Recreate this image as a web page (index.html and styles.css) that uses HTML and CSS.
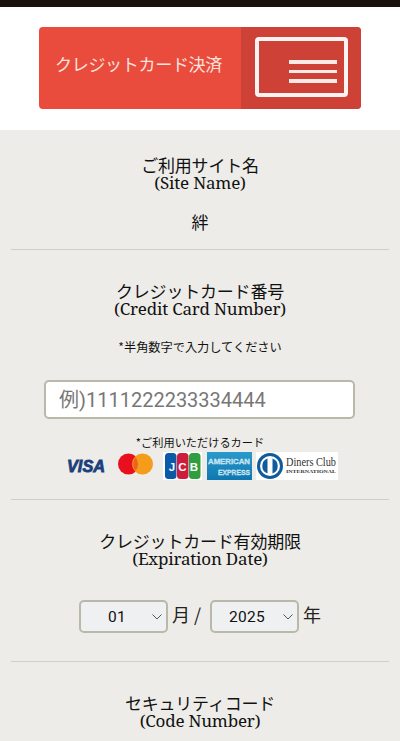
FILE: index.html
```html
<!DOCTYPE html>
<html lang="ja">
<head>
<meta charset="utf-8">
<title>クレジットカード決済</title>
<link rel="stylesheet" href="styles.css">
</head>
<body>
<div class="topbar"></div>
<header class="header">
  <div class="banner">
    <div class="banner-label">クレジットカード決済</div>
    <div class="banner-icon">
      <div class="card-outline">
        <span></span><span></span><span></span>
      </div>
    </div>
  </div>
</header>
<main class="form">
  <section class="block block-site">
    <h2 class="title">ご利用サイト名<br>(Site Name)</h2>
    <p class="site-value">絆</p>
  </section>
  <section class="block block-card">
    <h2 class="title">クレジットカード番号<br>(Credit Card Number)</h2>
    <p class="note">*半角数字で入力してください</p>
    <input class="card-input" type="text" placeholder="例)1111222233334444">
    <p class="note-cards">*ご利用いただけるカード</p>
    <div class="logos">
      <svg class="logo-visa" width="40" height="18" viewBox="0 0 40 18"><text x="1" y="15" textLength="38" lengthAdjust="spacingAndGlyphs" class="visa-text">VISA</text></svg>
      <svg class="logo-mc" width="37" height="22" viewBox="0 0 37 22">
        <circle cx="11.500" cy="11" r="10.500" fill="#e8101f"/>
        <circle cx="25.500" cy="11" r="10.500" fill="#f59c1a"/>
        <path d="M18.500 4.200a10.500 10.500 0 0 1 0 13.600a10.500 10.500 0 0 1 0-13.600z" fill="#f0601f"/>
      </svg>
      <svg class="logo-jcb" width="39" height="28" viewBox="0 0 39 28">
        <rect width="39" height="28" fill="#fff"/>
        <rect x="2" y="1" width="11.500" height="26" rx="3.500" fill="#0a5aa8"/>
        <rect x="14" y="1" width="11.500" height="26" rx="3.500" fill="#d01c3c"/>
        <rect x="26" y="1" width="11.500" height="26" rx="3.500" fill="#2e9e3f"/>
        <text x="9" y="19" class="jcb-text">J</text>
        <text x="19.500" y="19" class="jcb-text">C</text>
        <text x="31" y="19" class="jcb-text">B</text>
      </svg>
      <svg class="logo-amex" width="45" height="28" viewBox="0 0 45 28">
        <defs><linearGradient id="amexbg" x1="0" y1="0" x2="0" y2="1"><stop offset="0" stop-color="#2a9acb"/><stop offset="1" stop-color="#0f77b0"/></linearGradient></defs>
        <rect width="45" height="28" fill="url(#amexbg)"/>
        <text x="1" y="12" textLength="42" lengthAdjust="spacingAndGlyphs" class="amex-text">AMERICAN</text>
        <text x="11" y="23" textLength="32" lengthAdjust="spacingAndGlyphs" class="amex-text">EXPRESS</text>
      </svg>
      <svg class="logo-diners" width="82" height="28" viewBox="0 0 82 28">
        <rect width="82" height="28" fill="#fff"/>
        <circle cx="14" cy="14" r="13" fill="#0f5b9c"/>
        <circle cx="14" cy="14" r="10" fill="#fff"/>
        <path d="M11.500 6.500a8 8 0 0 0 0 15zM16.500 6.500a8 8 0 0 1 0 15z" fill="#0f5b9c"/>
        <text x="30" y="14" textLength="50" lengthAdjust="spacingAndGlyphs" class="diners-text">Diners Club</text>
        <text x="30" y="20.500" textLength="50" lengthAdjust="spacingAndGlyphs" class="diners-sub">INTERNATIONAL</text>
      </svg>
    </div>
  </section>
  <section class="block block-exp">
    <h2 class="title">クレジットカード有効期限<br>(Expiration Date)</h2>
    <div class="date-row">
      <div class="select select-month"><span class="select-value">01</span><svg class="chev" width="10" height="6" viewBox="0 0 10 6"><path d="M.5.5 5 5 9.500.5" fill="none" stroke="#555" stroke-width="1"/></svg></div>
      <span class="unit unit-month">月 /</span>
      <div class="select select-year"><span class="select-value">2025</span><svg class="chev" width="10" height="6" viewBox="0 0 10 6"><path d="M.5.5 5 5 9.500.5" fill="none" stroke="#555" stroke-width="1"/></svg></div>
      <span class="unit">年</span>
    </div>
  </section>
  <section class="block block-code">
    <h2 class="title">セキュリティコード<br>(Code Number)</h2>
  </section>
</main>
</body>
</html>
```
FILE: styles.css
```css
* { box-sizing: border-box; }
html, body { margin: 0; padding: 0; height: 741px; overflow: hidden; }
body {
  background: #edece8;
  color: #111;
  font-family: "Noto Serif", "DejaVu Serif", "Noto Sans CJK JP", serif;
}
.topbar { height: 7px; background: #1a110b; }
.header {
  height: 123px;
  background: #fff;
  padding: 20px 39px 0 39px;
}
.banner {
  width: 322px;
  height: 82px;
  display: flex;
  border-radius: 4px;
  overflow: hidden;
  background: #e94c3d;
}
.banner-label {
  width: 202px;
  padding: 0 0 9px 16px;
  display: flex;
  align-items: center;
  color: #fde3de;
  font: 400 17px/1 "Noto Sans CJK JP", sans-serif;
  letter-spacing: -0.3px;
  white-space: nowrap;
}
.banner-icon {
  flex: 1;
  background: #cd4136;
  padding: 10px 12px 12px 14px;
}
.card-outline {
  height: 60px;
  width: 93px;
  border: 4px solid #fdf3f0;
  border-radius: 4px;
  display: flex;
  flex-direction: column;
  align-items: flex-end;
  justify-content: center;
  gap: 6px;
  padding: 9px 7px 0 0;
}
.card-outline span {
  display: block;
  width: 48px;
  height: 3.500px;
  background: #fbeae6;
}
.block {
  margin: 0 11px;
  text-align: center;
  border-bottom: 1px solid #cfcec9;
}
.block-site { height: 120px; padding-top: 27px; }
.block-card { height: 250px; padding-top: 33px; }
.block-exp { height: 162px; padding-top: 33px; }
.block-code { border-bottom: 0; padding-top: 33px; }
.title {
  margin: 0;
  font-size: 17px;
  font-weight: 400;
  line-height: 17px;
  letter-spacing: -0.2px;
}
.site-value {
  margin: 21px 0 0;
  font: 400 17px/20px "Noto Sans CJK JP", serif;
}
.note {
  margin: 23px 0 0;
  font: 400 12.200px/14px "Noto Sans CJK JP", sans-serif;
}
.card-input {
  display: block;
  width: 311px;
  height: 39px;
  margin: 26px 0 0 33px;
  padding: 0 13px;
  border: 2px solid #b9b8a9;
  border-radius: 5px;
  background: #fff;
  font: 400 20px "Roboto", "Noto Sans CJK JP", sans-serif;
  outline: none;
}
.card-input::placeholder { color: #777; opacity: 1; }
.note-cards {
  margin: 16px 0 0;
  font: 400 11.200px/14px "Noto Sans CJK JP", sans-serif;
}
.logos {
  display: flex;
  align-items: center;
  height: 28px;
  margin: 3px 0 0 55px;
}
.logos svg { display: block; flex: none; }
.logo-mc { margin-left: 11px; margin-top: -4px; }
.logo-jcb { margin-left: 9px; }
.logo-amex { margin-left: 5px; }
.logo-diners { margin-left: 4px; }
.visa-text {
  font: italic 700 16px "Liberation Sans", sans-serif;
  fill: #1a3f7c;
  stroke: #1a3f7c;
  stroke-width: 0.8px;
}
.jcb-text {
  font: 700 11.500px "Liberation Sans", sans-serif;
  fill: #fff;
  text-anchor: middle;
}
.amex-text {
  font: 700 7.500px "Liberation Sans", sans-serif;
  fill: #a9d8ec;
  stroke: #e6f4fa;
  stroke-width: 0.3px;
}
.diners-text {
  font: 400 12px "Liberation Serif", serif;
  fill: #333;
}
.diners-sub {
  font: 700 5px "Liberation Serif", serif;
  fill: #333;
}
.date-row {
  display: flex;
  align-items: center;
  margin: 33px 0 0 68px;
}
.select {
  position: relative;
  width: 89px;
  height: 33px;
  border: 2px solid #b9b8a9;
  border-radius: 5px;
  background: #eff0f1;
  display: flex;
  align-items: center;
}
.select-month { padding-left: 27px; }
.select-year { padding-left: 17px; }
.select-value { font: 400 15.500px "Roboto", sans-serif; color: #111; letter-spacing: 0.3px; }
.chev { position: absolute; right: 4px; top: 12px; }
.unit {
  font: 400 18px/1 "Noto Sans CJK JP", sans-serif;
  color: #222;
  margin: -6px 0 0 4px;
  text-align: left;
}
.unit-month { width: 38px; }
```
